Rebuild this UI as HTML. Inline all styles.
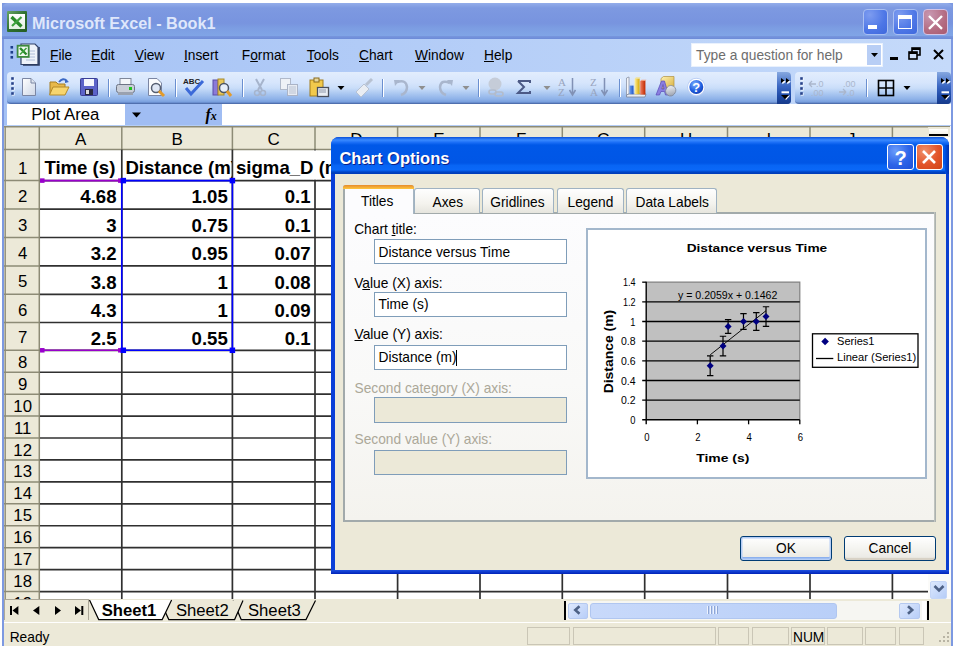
<!DOCTYPE html><html><head><meta charset="utf-8"><style>
*{margin:0;padding:0;box-sizing:border-box}
html,body{width:957px;height:649px;overflow:hidden;background:#fff;font-family:"Liberation Sans",sans-serif;position:relative}
.a{position:absolute}
.t{position:absolute;white-space:nowrap;line-height:1}
</style></head><body><div class="a" style="left:2.00px;top:3.00px;width:951.00px;height:643.00px;background:#7d99e1"></div>
<div class="a" style="left:2.00px;top:3.00px;width:951.00px;height:35.00px;background:linear-gradient(#93adea 0px,#7d99e1 5px,#7894df 20px,#7c9de2 25px,#80a5e6 33px,#7a9de2 35px);border-radius:6px 6px 0 0"></div>
<div class="a" style="left:6.50px;top:11.00px;width:20.30px;height:20.70px;background:linear-gradient(135deg,#6aa66a,#2f702f 50%,#245c24);border-radius:1px"></div>
<div class="a" style="left:9.20px;top:13.90px;width:15.50px;height:15.10px;background:linear-gradient(#ffffff,#e3f0e3)"></div>
<svg class="a" style="left:9.2px;top:13.9px" width="15.5" height="15.1" viewBox="0 0 15.5 15.1"><path d="M2.5 3 L12.5 12.5" stroke="#2a8a2a" stroke-width="3.2"/><path d="M12.5 3 L3 12" stroke="#3fa23f" stroke-width="2.2"/></svg>
<div class="t" style="left:32.00px;top:15.29px;font-size:16.2px;font-weight:bold;color:#dfe7fb">Microsoft Excel - Book1</div>
<div class="a" style="left:862.50px;top:9.00px;width:25.00px;height:25.60px;background:radial-gradient(circle at 25% 20%,#7d9cf0,#4d76e6 60%,#3f68dc);border:1.2px solid #a9bff2;border-radius:4px"></div>
<div class="a" style="left:868.30px;top:25.00px;width:9.10px;height:4.00px;background:#fff"></div>
<div class="a" style="left:892.80px;top:9.00px;width:25.00px;height:25.60px;background:radial-gradient(circle at 25% 20%,#7d9cf0,#4d76e6 60%,#3f68dc);border:1.2px solid #a9bff2;border-radius:4px"></div>
<div class="a" style="left:898.20px;top:15.00px;width:13.80px;height:14.00px;border:1.5px solid #fff;border-top-width:4px"></div>
<div class="a" style="left:922.70px;top:9.00px;width:25.00px;height:25.60px;background:radial-gradient(circle at 25% 20%,#c797b0,#b46c82 60%,#a85a70);border:1.2px solid #d3c4e6;border-radius:4px"></div>
<svg class="a" style="left:922.7px;top:9px" width="25" height="26" viewBox="0 0 25 26"><path d="M6 7 L19 19.8 M19 7 L6 19.8" stroke="#fff" stroke-width="2.4"/></svg>
<div class="a" style="left:4.00px;top:38.00px;width:947.00px;height:33.50px;background:linear-gradient(90deg,#a5c2f5,#c5dafa)"></div>
<div class="a" style="left:2.00px;top:36.30px;width:951.00px;height:3.20px;background:linear-gradient(#7896de,#6c8bd7)"></div>
<svg class="a" style="left:6px;top:42px" width="36" height="26" viewBox="0 0 36 26"><rect x="4.5" y="4" width="2.6" height="2.6" fill="#1e3f8a"/><rect x="4.5" y="9" width="2.6" height="2.6" fill="#1e3f8a"/><rect x="4.5" y="14" width="2.6" height="2.6" fill="#1e3f8a"/><path d="M15 2 L29 2 L32 5 L32 22.5 L15 22.5 Z" fill="#eef2fa" stroke="#32436b" stroke-width="1.2"/><path d="M17 23 H33 V5" stroke="#2b3a5e" stroke-width="1.6" fill="none"/><path d="M20 9 H29 M20 12 H29 M20 15 H29 M20 18 H29" stroke="#9fb0d0" stroke-width="0.8"/><rect x="10.7" y="2.8" width="12.9" height="13" fill="#3d8a3d"/><rect x="12.5" y="4.6" width="9.3" height="9.4" fill="#f2faf2"/><path d="M14 6 L20.5 12.5" stroke="#2a8a2a" stroke-width="2.4"/><path d="M20.5 6 L14 12.5" stroke="#3fa23f" stroke-width="1.6"/></svg>
<div class="t" style="left:50.00px;top:48.86px;font-size:13.75px;color:#000"><u>F</u>ile</div>
<div class="t" style="left:91.00px;top:48.86px;font-size:13.75px;color:#000"><u>E</u>dit</div>
<div class="t" style="left:134.70px;top:48.86px;font-size:13.75px;color:#000"><u>V</u>iew</div>
<div class="t" style="left:184.00px;top:48.86px;font-size:13.75px;color:#000"><u>I</u>nsert</div>
<div class="t" style="left:241.80px;top:48.86px;font-size:13.75px;color:#000">F<u>o</u>rmat</div>
<div class="t" style="left:306.80px;top:48.86px;font-size:13.75px;color:#000"><u>T</u>ools</div>
<div class="t" style="left:359.00px;top:48.86px;font-size:13.75px;color:#000"><u>C</u>hart</div>
<div class="t" style="left:415.00px;top:48.86px;font-size:13.75px;color:#000"><u>W</u>indow</div>
<div class="t" style="left:484.00px;top:48.86px;font-size:13.75px;color:#000"><u>H</u>elp</div>
<div class="a" style="left:691.00px;top:43.00px;width:191.50px;height:23.50px;background:#fff;border:1.5px solid #e9f1fd"></div>
<div class="a" style="left:867.00px;top:44.50px;width:14.00px;height:20.50px;background:#b8cef5"></div>
<svg class="a" style="left:869px;top:50px" width="12" height="10"><path d="M2 3 L9 3 L5.5 7 Z" fill="#000"/></svg>
<div class="t" style="left:696.00px;top:48.86px;font-size:13.75px;color:#6d6d6d">Type a question for help</div>
<div class="a" style="left:890.00px;top:56.50px;width:8.00px;height:3.50px;background:#000"></div>
<svg class="a" style="left:907px;top:46px" width="16" height="16"><rect x="5" y="2" width="8" height="7" fill="none" stroke="#000" stroke-width="1.6"/><rect x="5" y="2" width="8" height="2" fill="#000"/><rect x="2" y="6" width="8" height="7" fill="#cfe0fa" stroke="#000" stroke-width="1.6"/><rect x="2" y="6" width="8" height="2" fill="#000"/></svg>
<svg class="a" style="left:931px;top:47px" width="16" height="16"><path d="M3 3 L12 12 M12 3 L3 12" stroke="#000" stroke-width="2"/></svg>
<div class="a" style="left:4.00px;top:71.50px;width:947.00px;height:32.50px;background:linear-gradient(90deg,#a5c2f5,#c5dafa)"></div>
<div class="a" style="left:6.50px;top:71.50px;width:784.50px;height:32.00px;background:linear-gradient(#e2edfd 0%,#d6e5fc 35%,#c9ddf9 52%,#aac7f1 70%,#8db1e8 88%,#7aa0de 96%,#5f82c4 100%);border-radius:4px;border-bottom:1.5px solid #4f6fae"></div>
<svg class="a" style="left:10.0px;top:76px" width="6" height="22"><rect x="2" y="2" width="2.6" height="2.6" fill="#fff" opacity=".8"/><rect x="1.2" y="1.2" width="2.6" height="2.6" fill="#27428a"/><rect x="2" y="7" width="2.6" height="2.6" fill="#fff" opacity=".8"/><rect x="1.2" y="6.2" width="2.6" height="2.6" fill="#27428a"/><rect x="2" y="12" width="2.6" height="2.6" fill="#fff" opacity=".8"/><rect x="1.2" y="11.2" width="2.6" height="2.6" fill="#27428a"/><rect x="2" y="17" width="2.6" height="2.6" fill="#fff" opacity=".8"/><rect x="1.2" y="16.2" width="2.6" height="2.6" fill="#27428a"/></svg>
<div class="a" style="left:777.00px;top:71.50px;width:14.00px;height:32.00px;background:linear-gradient(#86a8e0,#3a66c2 45%,#1e4aa6 75%,#173b8a);border-radius:0 4px 4px 0"></div>
<svg class="a" style="left:779px;top:76px" width="12" height="26"><path d="M2.5 2.5 L6 5 L2.5 7.5 Z M7.5 2.5 L11 5 L7.5 7.5 Z" fill="#fff" transform="translate(0.8 0.8)"/><path d="M2 2 L5.5 4.5 L2 7 Z M7 2 L10.5 4.5 L7 7 Z" fill="#000"/><rect x="2.5" y="15.3" width="7.5" height="2" fill="#fff"/><path d="M3 19.5 L11 19.5 L7 24 Z" fill="#fff"/><path d="M2 19 L10 19 L6 23.3 Z" fill="#000"/></svg>
<div class="a" style="left:795.00px;top:71.50px;width:155.50px;height:32.00px;background:linear-gradient(#e2edfd 0%,#d6e5fc 35%,#c9ddf9 52%,#aac7f1 70%,#8db1e8 88%,#7aa0de 96%,#5f82c4 100%);border-radius:4px;border-bottom:1.5px solid #4f6fae"></div>
<svg class="a" style="left:798.5px;top:76px" width="6" height="22"><rect x="2" y="2" width="2.6" height="2.6" fill="#fff" opacity=".8"/><rect x="1.2" y="1.2" width="2.6" height="2.6" fill="#27428a"/><rect x="2" y="7" width="2.6" height="2.6" fill="#fff" opacity=".8"/><rect x="1.2" y="6.2" width="2.6" height="2.6" fill="#27428a"/><rect x="2" y="12" width="2.6" height="2.6" fill="#fff" opacity=".8"/><rect x="1.2" y="11.2" width="2.6" height="2.6" fill="#27428a"/><rect x="2" y="17" width="2.6" height="2.6" fill="#fff" opacity=".8"/><rect x="1.2" y="16.2" width="2.6" height="2.6" fill="#27428a"/></svg>
<div class="a" style="left:936.50px;top:71.50px;width:14.00px;height:32.00px;background:linear-gradient(#86a8e0,#3a66c2 45%,#1e4aa6 75%,#173b8a);border-radius:0 4px 4px 0"></div>
<svg class="a" style="left:938.5px;top:76px" width="12" height="26"><path d="M2.5 2.5 L6 5 L2.5 7.5 Z M7.5 2.5 L11 5 L7.5 7.5 Z" fill="#fff" transform="translate(0.8 0.8)"/><path d="M2 2 L5.5 4.5 L2 7 Z M7 2 L10.5 4.5 L7 7 Z" fill="#000"/><rect x="2.5" y="15.3" width="7.5" height="2" fill="#fff"/><path d="M3 19.5 L11 19.5 L7 24 Z" fill="#fff"/><path d="M2 19 L10 19 L6 23.3 Z" fill="#000"/></svg>
<svg class="a" style="left:20px;top:77px" width="18" height="20" viewBox="0 0 18 20"><defs><linearGradient id="gp" x1="0" y1="0" x2="1" y2="1"><stop offset="0" stop-color="#fff"/><stop offset="1" stop-color="#cdd6e6"/></linearGradient></defs><path d="M2.5 1.5 L11 1.5 L15.5 6 L15.5 18.5 L2.5 18.5 Z" fill="url(#gp)" stroke="#7b86a3"/><path d="M11 1.5 L11 6 L15.5 6" fill="#dfe5f0" stroke="#7b86a3"/></svg>
<svg class="a" style="left:48px;top:77px" width="23" height="20" viewBox="0 0 23 20"><path d="M2 5 L8 5 L10 7 L17 7 L17 17 L2 17 Z" fill="#e7b84a" stroke="#a57d22"/><path d="M5 10 L21 10 L17 18 L1.5 18 Z" fill="#f7d56e" stroke="#b48a28"/><path d="M11 5 Q15 0 19 4" stroke="#3b68c4" stroke-width="2" fill="none"/><path d="M17 2 L21 5 L17 6 Z" fill="#3b68c4"/></svg>
<svg class="a" style="left:79px;top:77px" width="20" height="20" viewBox="0 0 20 20"><rect x="1.5" y="1.5" width="17" height="17" rx="1" fill="#5b63c8" stroke="#3a3f96"/><rect x="5" y="2" width="10" height="7" fill="#f4f6fc"/><rect x="6" y="12" width="8" height="6" fill="#2a2a40"/><rect x="7" y="13" width="3" height="4" fill="#ddd"/></svg>
<div class="a" style="left:107.50px;top:78.50px;width:1.00px;height:18.50px;background:#6a8fd0"></div>
<div class="a" style="left:108.50px;top:78.50px;width:1.00px;height:18.50px;background:#fff"></div>
<svg class="a" style="left:115px;top:77px" width="21" height="20" viewBox="0 0 21 20"><rect x="5" y="1.5" width="11" height="7" fill="#f4f6fa" stroke="#7f8799"/><rect x="1.5" y="7.5" width="18" height="8" rx="2" fill="#c9ced8" stroke="#6d7484"/><rect x="3" y="15" width="15" height="3" fill="#9aa1af"/><rect x="14" y="10" width="3" height="3" fill="#1fc21f"/></svg>
<svg class="a" style="left:146px;top:77px" width="22" height="21" viewBox="0 0 22 21"><path d="M2.5 1.5 L11 1.5 L15.5 6 L15.5 18.5 L2.5 18.5 Z" fill="#fafbfd" stroke="#7b86a3"/><circle cx="10" cy="11" r="4.5" fill="#dfe7f5" stroke="#555e70" stroke-width="1.5"/><path d="M13 14 L18 19" stroke="#e39b2a" stroke-width="3"/></svg>
<div class="a" style="left:174.50px;top:78.50px;width:1.00px;height:18.50px;background:#6a8fd0"></div>
<div class="a" style="left:175.50px;top:78.50px;width:1.00px;height:18.50px;background:#fff"></div>
<svg class="a" style="left:182px;top:76px" width="23" height="21" viewBox="0 0 23 21"><text x="1" y="8" font-family="Liberation Sans" font-size="8" font-weight="bold" fill="#222">ABC</text><path d="M4 12 L9 18 L21 5" stroke="#3c6ad8" stroke-width="3" fill="none"/></svg>
<svg class="a" style="left:211px;top:77px" width="23" height="21" viewBox="0 0 23 21"><rect x="2" y="3" width="5" height="15" fill="#8b7ad8" stroke="#5a4ca8"/><rect x="7" y="2" width="6" height="16" fill="#e8c65a" stroke="#a88a2a"/><circle cx="13" cy="11" r="4.5" fill="#e6eefa" stroke="#4a5468" stroke-width="1.5"/><path d="M16 14 L20 19" stroke="#e39b2a" stroke-width="3"/></svg>
<div class="a" style="left:241.50px;top:78.50px;width:1.00px;height:18.50px;background:#6a8fd0"></div>
<div class="a" style="left:242.50px;top:78.50px;width:1.00px;height:18.50px;background:#fff"></div>
<svg class="a" style="left:252px;top:77px" width="16" height="20" viewBox="0 0 16 20"><path d="M4 2 L10 13 M12 2 L6 13" stroke="#a6b4cc" stroke-width="2"/><circle cx="5" cy="16" r="2.5" fill="none" stroke="#a6b4cc" stroke-width="1.5"/><circle cx="11" cy="16" r="2.5" fill="none" stroke="#a6b4cc" stroke-width="1.5"/></svg>
<svg class="a" style="left:279px;top:77px" width="22" height="20" viewBox="0 0 22 20"><rect x="1.5" y="1.5" width="10" height="11" fill="#eef1f6" stroke="#b0b9ca"/><rect x="8.5" y="7.5" width="10" height="11" fill="#e7ebf2" stroke="#aab3c6"/><path d="M10 10 H17 M10 12 H17 M10 14 H17 M10 16 H17" stroke="#b9c2d2"/></svg>
<svg class="a" style="left:308px;top:76px" width="24" height="22" viewBox="0 0 24 22"><rect x="2" y="4" width="13" height="16" fill="#f2c94c" stroke="#a27c1c"/><rect x="6" y="2" width="5" height="4" fill="#e6d7a0" stroke="#8a6a1a"/><rect x="9.5" y="11.5" width="11" height="9" fill="#e9edf3" stroke="#4a4f5c" stroke-width="1.3"/><path d="M11 14 H18 M11 16 H18" stroke="#8f98aa"/></svg>
<svg class="a" style="left:336.5px;top:85px" width="8" height="6" viewBox="0 0 8 6"><path d="M0.5 1 L7.5 1 L4 5 Z" fill="#000"/></svg>
<svg class="a" style="left:354px;top:76px" width="22" height="22" viewBox="0 0 22 22"><path d="M2 16 L10 8 L15 13 L7 21 Z" fill="#e9edf3" stroke="#b8c2d2"/><path d="M12 9 L18 3" stroke="#b8c2d2" stroke-width="3"/></svg>
<div class="a" style="left:381.50px;top:78.50px;width:1.00px;height:18.50px;background:#6a8fd0"></div>
<div class="a" style="left:382.50px;top:78.50px;width:1.00px;height:18.50px;background:#fff"></div>
<svg class="a" style="left:392px;top:77px" width="20" height="20" viewBox="0 0 20 20"><path d="M5 5 Q14 2 15 10 Q15 16 9 18" stroke="#a9b6cd" stroke-width="2.5" fill="none"/><path d="M2 3 L8 3 L3 9 Z" fill="#a9b6cd"/></svg>
<svg class="a" style="left:417.5px;top:85px" width="8" height="6" viewBox="0 0 8 6"><path d="M0.5 1 L7.5 1 L4 5 Z" fill="#8f8f8f"/></svg>
<svg class="a" style="left:435px;top:77px" width="20" height="20" viewBox="0 0 20 20"><path d="M15 6 Q6 2 5 10 Q5 16 11 18" stroke="#a9b6cd" stroke-width="2.5" fill="none"/><path d="M18 3 L12 3 L17 9 Z" fill="#a9b6cd"/></svg>
<svg class="a" style="left:461.5px;top:85px" width="8" height="6" viewBox="0 0 8 6"><path d="M0.5 1 L7.5 1 L4 5 Z" fill="#8f8f8f"/></svg>
<div class="a" style="left:477.50px;top:78.50px;width:1.00px;height:18.50px;background:#6a8fd0"></div>
<div class="a" style="left:478.50px;top:78.50px;width:1.00px;height:18.50px;background:#fff"></div>
<svg class="a" style="left:485px;top:76px" width="21" height="22" viewBox="0 0 21 22"><circle cx="10" cy="8" r="6.5" fill="#c5ccd8"/><rect x="4" y="14" width="7" height="4" rx="2" fill="none" stroke="#b3bccb" stroke-width="1.6"/><rect x="10" y="16" width="8" height="4" rx="2" fill="none" stroke="#b3bccb" stroke-width="1.6"/></svg>
<svg class="a" style="left:515px;top:77px" width="20" height="20" viewBox="0 0 20 20"><path d="M3 4 L15 4 L15 6 M3 4 L9 10 L3 16 L15 16 L15 14" stroke="#4c5a86" stroke-width="2" fill="none"/></svg>
<svg class="a" style="left:542.6px;top:85px" width="8" height="6" viewBox="0 0 8 6"><path d="M0.5 1 L7.5 1 L4 5 Z" fill="#8f8f8f"/></svg>
<svg class="a" style="left:557px;top:76px" width="24" height="22" viewBox="0 0 24 22"><text x="1" y="10" font-family="Liberation Serif" font-size="11" fill="#98a4be">A</text><text x="1" y="20" font-family="Liberation Serif" font-size="11" fill="#98a4be">Z</text><path d="M15.5 2 V18 M12.5 14 L15.5 19 L18.5 14" stroke="#8191b5" stroke-width="1.5" fill="none"/></svg>
<svg class="a" style="left:589px;top:76px" width="24" height="22" viewBox="0 0 24 22"><text x="1" y="10" font-family="Liberation Serif" font-size="11" fill="#98a4be">Z</text><text x="1" y="20" font-family="Liberation Serif" font-size="11" fill="#98a4be">A</text><path d="M15.5 2 V18 M12.5 14 L15.5 19 L18.5 14" stroke="#8191b5" stroke-width="1.5" fill="none"/></svg>
<div class="a" style="left:618.50px;top:78.50px;width:1.00px;height:18.50px;background:#6a8fd0"></div>
<div class="a" style="left:619.50px;top:78.50px;width:1.00px;height:18.50px;background:#fff"></div>
<svg class="a" style="left:624px;top:75px" width="24" height="24" viewBox="0 0 24 24"><defs><linearGradient id="cwb" x1="0" x2="1"><stop offset="0" stop-color="#6fa0f0"/><stop offset="1" stop-color="#1f55c8"/></linearGradient><linearGradient id="cwy" x1="0" x2="1"><stop offset="0" stop-color="#fff0a0"/><stop offset="1" stop-color="#d8a800"/></linearGradient><linearGradient id="cwr" x1="0" x2="1"><stop offset="0" stop-color="#f08060"/><stop offset="1" stop-color="#c02800"/></linearGradient></defs><path d="M2.5 3 L5 2 L5 19 L2.5 20 Z" fill="#f4f6fa" stroke="#8a93a6" stroke-width="0.8"/><path d="M2.5 20 L5 19 L22 19 L21 22 L2.5 22 Z" fill="#e8ecf4" stroke="#7a8498" stroke-width="0.8"/><rect x="5.5" y="10.6" width="4" height="8.6" fill="url(#cwb)"/><rect x="10.6" y="3.6" width="5" height="15.6" fill="url(#cwy)"/><rect x="16.2" y="6" width="5.2" height="13.6" fill="url(#cwr)"/><path d="M10.6 3.6 L12 2.4 L16.8 2.4 L15.6 3.6 Z" fill="#f8e070"/><path d="M16.2 6 L17.6 4.8 L22.4 4.8 L21.4 6 Z" fill="#f0a080"/></svg>
<svg class="a" style="left:654px;top:74px" width="24" height="24" viewBox="0 0 24 24"><defs><linearGradient id="dcy" x1="0" y1="0" x2="1" y2="1"><stop offset="0" stop-color="#fff2b0"/><stop offset="1" stop-color="#d8b040"/></linearGradient><linearGradient id="dcg" x1="0" y1="0" x2="1" y2="1"><stop offset="0" stop-color="#ffffff"/><stop offset="1" stop-color="#8c94a4"/></linearGradient></defs><path d="M7 4.5 L9.5 2.5 L20 2.5 L20 13 L17.5 14.5 L7 14.5 Z" fill="url(#dcy)" stroke="#b09040" stroke-width="0.7"/><path d="M2 21 L7.5 7 L10.5 7 L14.5 21 L11.5 21 L10.5 17.5 L7 17.5 L5.5 21 Z M7.8 15 L10 15 L9 10.5 Z" fill="#8a7ee0" stroke="#5a4ab8" stroke-width="0.7"/><rect x="12" y="11.5" width="9.5" height="10.5" rx="4.5" transform="rotate(35 16.7 16.7)" fill="url(#dcg)" stroke="#7b8496" stroke-width="0.7"/></svg>
<svg class="a" style="left:686px;top:77px" width="21" height="21" viewBox="0 0 21 21"><defs><radialGradient id="hg" cx="0.4" cy="0.3" r="0.8"><stop offset="0" stop-color="#7fb0ff"/><stop offset="0.6" stop-color="#1f5ee0"/><stop offset="1" stop-color="#1238a8"/></radialGradient></defs><circle cx="10.3" cy="10" r="9.2" fill="#b9cdf4"/><circle cx="10.3" cy="10" r="8.3" fill="#fff"/><circle cx="10.3" cy="10" r="7" fill="url(#hg)"/><text x="10.3" y="14.8" text-anchor="middle" font-family="Liberation Sans" font-weight="bold" font-size="13" fill="#fff">?</text></svg>
<svg class="a" style="left:807px;top:78px" width="22" height="20" viewBox="0 0 22 20"><path d="M2 6 H9 M2 6 L5 3 M2 6 L5 9" stroke="#aab6cc" stroke-width="1.3" fill="none"/><text x="9" y="9" font-family="Liberation Sans" font-size="9" fill="#aab6cc">.0</text><text x="4" y="18" font-family="Liberation Sans" font-size="9" fill="#aab6cc">.00</text></svg>
<svg class="a" style="left:837px;top:78px" width="22" height="20" viewBox="0 0 22 20"><text x="6" y="9" font-family="Liberation Sans" font-size="9" fill="#aab6cc">.00</text><path d="M2 14 H9 M9 14 L6 11 M9 14 L6 17" stroke="#aab6cc" stroke-width="1.3" fill="none"/><text x="10" y="18" font-family="Liberation Sans" font-size="9" fill="#aab6cc">.0</text></svg>
<div class="a" style="left:866.10px;top:78.50px;width:1.00px;height:18.50px;background:#6a8fd0"></div>
<div class="a" style="left:867.10px;top:78.50px;width:1.00px;height:18.50px;background:#fff"></div>
<svg class="a" style="left:876px;top:78px" width="20" height="20" viewBox="0 0 20 20"><rect x="2.5" y="2.5" width="15" height="15" fill="none" stroke="#000" stroke-width="1.6"/><path d="M10 2.5 V17.5 M2.5 10 H17.5" stroke="#000" stroke-width="1.6"/></svg>
<svg class="a" style="left:902.5px;top:85px" width="8" height="6" viewBox="0 0 8 6"><path d="M0.5 1 L7.5 1 L4 5 Z" fill="#000"/></svg>
<div class="a" style="left:4.00px;top:103.50px;width:947.00px;height:22.50px;background:#fff"></div>
<div class="a" style="left:4.00px;top:103.50px;width:3.00px;height:22.50px;background:#a5c2f5"></div>
<div class="a" style="left:4.00px;top:124.50px;width:947.00px;height:1.70px;background:#b4cdf6"></div>
<div class="a" style="left:7.00px;top:103.50px;width:118.00px;height:21.50px;background:#fff"></div>
<div class="a" style="left:125.00px;top:103.50px;width:97.00px;height:21.50px;background:#a0bdf3"></div>
<svg class="a" style="left:131px;top:111px" width="12" height="8" viewBox="0 0 12 8"><path d="M1 1.5 L10 1.5 L5.5 6.5 Z" fill="#000"/></svg>
<div class="t" style="left:31.30px;top:106.58px;font-size:16.8px;color:#000">Plot Area</div>
<div class="t" style="left:205.5px;top:107px;font-family:'Liberation Serif';font-style:italic;font-weight:bold;font-size:16px;color:#000">f<span style="font-size:12px">x</span></div>
<div class="a" style="left:4.00px;top:126.00px;width:924.00px;height:23.60px;background:#ece9d8"></div>
<div class="a" style="left:4.00px;top:149.60px;width:35.30px;height:449.40px;background:#ece9d8"></div>
<div class="a" style="left:39.30px;top:149.60px;width:888.70px;height:449.40px;background:#fff"></div>
<svg class="a" style="left:0;top:0" width="957" height="649" viewBox="0 0 957 649"><path d="M4 126.8 H928" stroke="#8d8b76" stroke-width="1.5"/><path d="M39.3 127 V149.6" stroke="#8d8b76" stroke-width="1.5"/><path d="M121.8 127 V149.6" stroke="#8d8b76" stroke-width="1.5"/><path d="M232.4 127 V149.6" stroke="#8d8b76" stroke-width="1.5"/><path d="M315 127 V149.6" stroke="#8d8b76" stroke-width="1.5"/><path d="M397.6 127 V149.6" stroke="#8d8b76" stroke-width="1.5"/><path d="M480 127 V149.6" stroke="#8d8b76" stroke-width="1.5"/><path d="M562.3 127 V149.6" stroke="#8d8b76" stroke-width="1.5"/><path d="M644.7 127 V149.6" stroke="#8d8b76" stroke-width="1.5"/><path d="M727.5 127 V149.6" stroke="#8d8b76" stroke-width="1.5"/><path d="M810 127 V149.6" stroke="#8d8b76" stroke-width="1.5"/><path d="M892.4 127 V149.6" stroke="#8d8b76" stroke-width="1.5"/><path d="M5.2 127 V599" stroke="#8d8b76" stroke-width="1.4"/><path d="M4 149.5 H928" stroke="#8d8b76" stroke-width="1.5"/><path d="M39.3 149.6 V599" stroke="#8d8b76" stroke-width="1.5"/><path d="M4 180.6 H39.3" stroke="#8d8b76" stroke-width="1.5"/><path d="M4 209.1 H39.3" stroke="#8d8b76" stroke-width="1.5"/><path d="M4 237.5 H39.3" stroke="#8d8b76" stroke-width="1.5"/><path d="M4 265.9 H39.3" stroke="#8d8b76" stroke-width="1.5"/><path d="M4 294.3 H39.3" stroke="#8d8b76" stroke-width="1.5"/><path d="M4 322.5 H39.3" stroke="#8d8b76" stroke-width="1.5"/><path d="M4 350.3 H39.3" stroke="#8d8b76" stroke-width="1.5"/><path d="M4 372.23 H39.3" stroke="#8d8b76" stroke-width="1.5"/><path d="M4 394.16 H39.3" stroke="#8d8b76" stroke-width="1.5"/><path d="M4 416.09000000000003 H39.3" stroke="#8d8b76" stroke-width="1.5"/><path d="M4 438.02000000000004 H39.3" stroke="#8d8b76" stroke-width="1.5"/><path d="M4 459.95000000000005 H39.3" stroke="#8d8b76" stroke-width="1.5"/><path d="M4 481.88000000000005 H39.3" stroke="#8d8b76" stroke-width="1.5"/><path d="M4 503.81000000000006 H39.3" stroke="#8d8b76" stroke-width="1.5"/><path d="M4 525.74 H39.3" stroke="#8d8b76" stroke-width="1.5"/><path d="M4 547.67 H39.3" stroke="#8d8b76" stroke-width="1.5"/><path d="M4 569.5999999999999 H39.3" stroke="#8d8b76" stroke-width="1.5"/><path d="M4 591.5299999999999 H39.3" stroke="#8d8b76" stroke-width="1.5"/><path d="M121.8 149.6 V599" stroke="#303030" stroke-width="1.7"/><path d="M232.4 149.6 V599" stroke="#303030" stroke-width="1.7"/><path d="M315 149.6 V599" stroke="#303030" stroke-width="1.7"/><path d="M397.6 149.6 V599" stroke="#303030" stroke-width="1.7"/><path d="M480 149.6 V599" stroke="#303030" stroke-width="1.7"/><path d="M562.3 149.6 V599" stroke="#303030" stroke-width="1.7"/><path d="M644.7 149.6 V599" stroke="#303030" stroke-width="1.7"/><path d="M727.5 149.6 V599" stroke="#303030" stroke-width="1.7"/><path d="M810 149.6 V599" stroke="#303030" stroke-width="1.7"/><path d="M892.4 149.6 V599" stroke="#303030" stroke-width="1.7"/><path d="M39.9 180.6 H928" stroke="#303030" stroke-width="1.7"/><path d="M39.9 209.1 H928" stroke="#303030" stroke-width="1.7"/><path d="M39.9 237.5 H928" stroke="#303030" stroke-width="1.7"/><path d="M39.9 265.9 H928" stroke="#303030" stroke-width="1.7"/><path d="M39.9 294.3 H928" stroke="#303030" stroke-width="1.7"/><path d="M39.9 322.5 H928" stroke="#303030" stroke-width="1.7"/><path d="M39.9 350.3 H928" stroke="#303030" stroke-width="1.7"/><path d="M39.9 372.23 H928" stroke="#303030" stroke-width="1.7"/><path d="M39.9 394.16 H928" stroke="#303030" stroke-width="1.7"/><path d="M39.9 416.09000000000003 H928" stroke="#303030" stroke-width="1.7"/><path d="M39.9 438.02000000000004 H928" stroke="#303030" stroke-width="1.7"/><path d="M39.9 459.95000000000005 H928" stroke="#303030" stroke-width="1.7"/><path d="M39.9 481.88000000000005 H928" stroke="#303030" stroke-width="1.7"/><path d="M39.9 503.81000000000006 H928" stroke="#303030" stroke-width="1.7"/><path d="M39.9 525.74 H928" stroke="#303030" stroke-width="1.7"/><path d="M39.9 547.67 H928" stroke="#303030" stroke-width="1.7"/><path d="M39.9 569.5999999999999 H928" stroke="#303030" stroke-width="1.7"/><path d="M39.9 591.5299999999999 H928" stroke="#303030" stroke-width="1.7"/><rect x="313.5" y="150.5" width="3" height="29.1" fill="#fff"/></svg>
<div class="t" style="left:-119.45px;width:400px;text-align:center;top:130.61px;font-size:17px;color:#000">A</div>
<div class="t" style="left:-22.90px;width:400px;text-align:center;top:130.61px;font-size:17px;color:#000">B</div>
<div class="t" style="left:73.70px;width:400px;text-align:center;top:130.61px;font-size:17px;color:#000">C</div>
<div class="t" style="left:156.30px;width:400px;text-align:center;top:130.61px;font-size:17px;color:#000">D</div>
<div class="t" style="left:238.80px;width:400px;text-align:center;top:130.61px;font-size:17px;color:#000">E</div>
<div class="t" style="left:321.15px;width:400px;text-align:center;top:130.61px;font-size:17px;color:#000">F</div>
<div class="t" style="left:403.50px;width:400px;text-align:center;top:130.61px;font-size:17px;color:#000">G</div>
<div class="t" style="left:486.10px;width:400px;text-align:center;top:130.61px;font-size:17px;color:#000">H</div>
<div class="t" style="left:568.75px;width:400px;text-align:center;top:130.61px;font-size:17px;color:#000">I</div>
<div class="t" style="left:651.20px;width:400px;text-align:center;top:130.61px;font-size:17px;color:#000">J</div>
<div class="t" style="left:-177.35px;width:400px;text-align:center;top:160.78px;font-size:16.8px;color:#000">1</div>
<div class="t" style="left:-177.35px;width:400px;text-align:center;top:189.28px;font-size:16.8px;color:#000">2</div>
<div class="t" style="left:-177.35px;width:400px;text-align:center;top:217.68px;font-size:16.8px;color:#000">3</div>
<div class="t" style="left:-177.35px;width:400px;text-align:center;top:246.08px;font-size:16.8px;color:#000">4</div>
<div class="t" style="left:-177.35px;width:400px;text-align:center;top:274.48px;font-size:16.8px;color:#000">5</div>
<div class="t" style="left:-177.35px;width:400px;text-align:center;top:302.68px;font-size:16.8px;color:#000">6</div>
<div class="t" style="left:-177.35px;width:400px;text-align:center;top:330.48px;font-size:16.8px;color:#000">7</div>
<div class="t" style="left:-177.35px;width:400px;text-align:center;top:354.81px;font-size:16.8px;color:#000">8</div>
<div class="t" style="left:-177.35px;width:400px;text-align:center;top:376.74px;font-size:16.8px;color:#000">9</div>
<div class="t" style="left:-177.35px;width:400px;text-align:center;top:398.67px;font-size:16.8px;color:#000">10</div>
<div class="t" style="left:-177.35px;width:400px;text-align:center;top:420.60px;font-size:16.8px;color:#000">11</div>
<div class="t" style="left:-177.35px;width:400px;text-align:center;top:442.53px;font-size:16.8px;color:#000">12</div>
<div class="t" style="left:-177.35px;width:400px;text-align:center;top:464.46px;font-size:16.8px;color:#000">13</div>
<div class="t" style="left:-177.35px;width:400px;text-align:center;top:486.39px;font-size:16.8px;color:#000">14</div>
<div class="t" style="left:-177.35px;width:400px;text-align:center;top:508.32px;font-size:16.8px;color:#000">15</div>
<div class="t" style="left:-177.35px;width:400px;text-align:center;top:530.25px;font-size:16.8px;color:#000">16</div>
<div class="t" style="left:-177.35px;width:400px;text-align:center;top:552.18px;font-size:16.8px;color:#000">17</div>
<div class="t" style="left:-177.35px;width:400px;text-align:center;top:574.11px;font-size:16.8px;color:#000">18</div>
<div class="t" style="left:-177.35px;width:400px;text-align:center;top:596.04px;font-size:16.8px;color:#000">19</div>
<div class="t" style="left:44.40px;top:158.56px;font-size:18.6px;font-weight:bold;color:#000">Time (s)</div>
<div class="a" style="left:122px;top:150px;width:109.5px;height:30px;overflow:hidden"><div class="t" style="left:3.4px;top:8.56px;font-size:18.6px;font-weight:bold">Distance (m)</div></div>
<div class="t" style="left:236.00px;top:158.56px;font-size:18.6px;font-weight:bold;color:#000">sigma_D (m)</div>
<div class="t" style="right:840.50px;top:188.46px;font-size:18.6px;font-weight:bold;color:#000">4.68</div>
<div class="t" style="right:729.20px;top:188.46px;font-size:18.6px;font-weight:bold;color:#000">1.05</div>
<div class="t" style="right:646.40px;top:188.46px;font-size:18.6px;font-weight:bold;color:#000">0.1</div>
<div class="t" style="right:840.50px;top:216.86px;font-size:18.6px;font-weight:bold;color:#000">3</div>
<div class="t" style="right:729.20px;top:216.86px;font-size:18.6px;font-weight:bold;color:#000">0.75</div>
<div class="t" style="right:646.40px;top:216.86px;font-size:18.6px;font-weight:bold;color:#000">0.1</div>
<div class="t" style="right:840.50px;top:245.26px;font-size:18.6px;font-weight:bold;color:#000">3.2</div>
<div class="t" style="right:729.20px;top:245.26px;font-size:18.6px;font-weight:bold;color:#000">0.95</div>
<div class="t" style="right:646.40px;top:245.26px;font-size:18.6px;font-weight:bold;color:#000">0.07</div>
<div class="t" style="right:840.50px;top:273.66px;font-size:18.6px;font-weight:bold;color:#000">3.8</div>
<div class="t" style="right:729.20px;top:273.66px;font-size:18.6px;font-weight:bold;color:#000">1</div>
<div class="t" style="right:646.40px;top:273.66px;font-size:18.6px;font-weight:bold;color:#000">0.08</div>
<div class="t" style="right:840.50px;top:301.86px;font-size:18.6px;font-weight:bold;color:#000">4.3</div>
<div class="t" style="right:729.20px;top:301.86px;font-size:18.6px;font-weight:bold;color:#000">1</div>
<div class="t" style="right:646.40px;top:301.86px;font-size:18.6px;font-weight:bold;color:#000">0.09</div>
<div class="t" style="right:840.50px;top:329.66px;font-size:18.6px;font-weight:bold;color:#000">2.5</div>
<div class="t" style="right:729.20px;top:329.66px;font-size:18.6px;font-weight:bold;color:#000">0.55</div>
<div class="t" style="right:646.40px;top:329.66px;font-size:18.6px;font-weight:bold;color:#000">0.1</div>
<svg class="a" style="left:0;top:0" width="957" height="649" viewBox="0 0 957 649"><path d="M40.3 180.6 H121.8 M40.3 350.3 H121.8" stroke="#9900cc" stroke-width="1.6"/><path d="M121.8 180.6 H232.4 V350.3 H121.8 Z" stroke="#0000ff" stroke-width="1.6" fill="none"/><rect x="40.05" y="178.35" width="4.5" height="4.5" fill="#9900cc"/><rect x="118.05" y="178.35" width="4.5" height="4.5" fill="#9900cc"/><rect x="40.05" y="348.05" width="4.5" height="4.5" fill="#9900cc"/><rect x="118.05" y="348.05" width="4.5" height="4.5" fill="#9900cc"/><rect x="120.55" y="177.85" width="5.5" height="5.5" fill="#0000ff"/><rect x="229.65" y="177.85" width="5.5" height="5.5" fill="#0000ff"/><rect x="120.55" y="347.55" width="5.5" height="5.5" fill="#0000ff"/><rect x="229.65" y="347.55" width="5.5" height="5.5" fill="#0000ff"/></svg>
<div class="a" style="left:928.00px;top:126.00px;width:23.00px;height:473.00px;background:#fbfbf9"></div>
<div class="a" style="left:928.00px;top:126.00px;width:22.00px;height:11.00px;background:#ece9d8;border-top:1.5px solid #8d8b76"></div>
<div class="a" style="left:928.50px;top:129.00px;width:19.50px;height:6.50px;background:linear-gradient(#fff,#f4f2e8);border-bottom:2px solid #000"></div>
<div class="a" style="left:930.00px;top:580.50px;width:17.00px;height:18.50px;background:linear-gradient(135deg,#dce8fd,#b6cdf7);border:1px solid #c5d6f6;border-radius:2px"></div>
<svg class="a" style="left:932.5px;top:584px" width="12" height="10" viewBox="0 0 12 10"><path d="M1.5 2 L6 6.5 L10.5 2" stroke="#4d6185" stroke-width="2.6" fill="none"/></svg>
<div class="a" style="left:4.00px;top:599.00px;width:947.00px;height:22.50px;background:#ece9d8"></div>
<div class="a" style="left:4.00px;top:599.00px;width:84.50px;height:21.00px;background:#ece9d8;border-top:1px solid #aca899;border-left:1px solid #aca899;border-right:1px solid #aca899"></div>
<svg class="a" style="left:9px;top:605px" width="12" height="11" viewBox="0 0 12 11"><rect x="1" y="1" width="2" height="9" fill="#000"/><path d="M9.4 1 L3.5 5.5 L9.4 10 Z" fill="#000"/></svg>
<svg class="a" style="left:32px;top:605px" width="8" height="11" viewBox="0 0 8 11"><path d="M7.3 1 L1 5.5 L7.3 10 Z" fill="#000"/></svg>
<svg class="a" style="left:53.5px;top:605px" width="8" height="11" viewBox="0 0 8 11"><path d="M1 1 L7 5.5 L1 10 Z" fill="#000"/></svg>
<svg class="a" style="left:73.5px;top:605px" width="12" height="11" viewBox="0 0 12 11"><path d="M1 1 L7 5.5 L1 10 Z" fill="#000"/><rect x="7.3" y="1" width="2" height="9" fill="#000"/></svg>
<svg class="a" style="left:80px;top:598px" width="250" height="24" viewBox="80 598 250 24"><path d="M233 600.6 L241.2 619.6 L306 619.6 L315.5 600.6" fill="#ece9d8" stroke="#000" stroke-width="1.2"/><path d="M160 600.6 L168.8 619.6 L234.6 619.6 L243 600.6" fill="#ece9d8" stroke="#000" stroke-width="1.2"/><path d="M89.5 600 L98.7 619.6 L162.2 619.6 L171.6 600 Z" fill="#fff"/><path d="M89.5 600 L98.7 619.6 L162.2 619.6 L171.6 600" fill="none" stroke="#000" stroke-width="1.2"/></svg>
<div class="t" style="left:101.70px;top:603.29px;font-size:16.67px;font-weight:bold;color:#000">Sheet1</div>
<div class="t" style="left:175.90px;top:603.29px;font-size:16.67px;color:#000">Sheet2</div>
<div class="t" style="left:248.00px;top:603.29px;font-size:16.67px;color:#000">Sheet3</div>
<div class="a" style="left:564.00px;top:601.00px;width:2.00px;height:19.00px;background:#000"></div>
<div class="a" style="left:566.00px;top:601.00px;width:385.00px;height:19.00px;background:#f6f6f2"></div>
<div class="a" style="left:568.30px;top:602.50px;width:20.00px;height:16.00px;background:linear-gradient(135deg,#dde8fd,#b8cef8);border:1px solid #b5c9f0;border-radius:2px"></div>
<svg class="a" style="left:572px;top:605px" width="12" height="10" viewBox="0 0 12 10"><path d="M7.5 1.2 L3.3 5 L7.5 8.8" stroke="#4d6185" stroke-width="2.6" fill="none"/></svg>
<div class="a" style="left:589.80px;top:602.50px;width:246.90px;height:16.00px;background:linear-gradient(90deg,#c8d9fa,#b9cff8);border:1px solid #b0c6f0;border-radius:3px"></div>
<svg class="a" style="left:706px;top:605px" width="12" height="10" viewBox="0 0 12 10"><path d="M1.5 1V9M4.5 1V9M7.5 1V9M10.5 1V9" stroke="#eef3fd" stroke-width="1"/><path d="M2.5 1V9M5.5 1V9M8.5 1V9M11.5 1V9" stroke="#8ea6d6" stroke-width="1"/></svg>
<div class="a" style="left:898.70px;top:602.50px;width:21.30px;height:16.00px;background:linear-gradient(135deg,#dde8fd,#b8cef8);border:1px solid #b5c9f0;border-radius:2px"></div>
<svg class="a" style="left:904px;top:605px" width="12" height="10" viewBox="0 0 12 10"><path d="M4 1.2 L8.2 5 L4 8.8" stroke="#4d6185" stroke-width="2.6" fill="none"/></svg>
<div class="a" style="left:922.00px;top:601.00px;width:4.00px;height:19.00px;background:#fff"></div>
<div class="a" style="left:927.00px;top:601.00px;width:1.50px;height:19.00px;background:#000"></div>
<div class="a" style="left:928.50px;top:599.00px;width:22.50px;height:22.50px;background:#ece9d8"></div>
<div class="a" style="left:4.00px;top:621.50px;width:947.00px;height:24.50px;background:#ece9d8"></div>
<div class="a" style="left:4.00px;top:621.50px;width:947.00px;height:1.50px;background:#fff"></div>
<div class="t" style="left:9.70px;top:630.66px;font-size:13.75px;color:#000">Ready</div>
<div class="a" style="left:527.20px;top:627.00px;width:43.00px;height:18.00px;border:1px solid #cac6b6"></div>
<div class="a" style="left:572.60px;top:627.00px;width:143.20px;height:18.00px;border:1px solid #cac6b6"></div>
<div class="a" style="left:718.20px;top:627.00px;width:31.10px;height:18.00px;border:1px solid #cac6b6"></div>
<div class="a" style="left:751.70px;top:627.00px;width:37.30px;height:18.00px;border:1px solid #cac6b6"></div>
<div class="a" style="left:791.30px;top:627.00px;width:33.40px;height:18.00px;border:1px solid #cac6b6"></div>
<div class="a" style="left:827.00px;top:627.00px;width:36.00px;height:18.00px;border:1px solid #cac6b6"></div>
<div class="a" style="left:865.30px;top:627.00px;width:31.10px;height:18.00px;border:1px solid #cac6b6"></div>
<div class="a" style="left:898.80px;top:627.00px;width:24.80px;height:18.00px;border:1px solid #cac6b6"></div>
<div class="t" style="left:793.00px;top:630.66px;font-size:13.75px;color:#000">NUM</div>
<svg class="a" style="left:937px;top:631px" width="13" height="13" viewBox="0 0 13 13"><rect x="10" y="1" width="2" height="2" fill="#b8b4a4"/><rect x="6" y="5" width="2" height="2" fill="#b8b4a4"/><rect x="10" y="5" width="2" height="2" fill="#b8b4a4"/><rect x="2" y="9" width="2" height="2" fill="#b8b4a4"/><rect x="6" y="9" width="2" height="2" fill="#b8b4a4"/><rect x="10" y="9" width="2" height="2" fill="#b8b4a4"/></svg>
<div class="a" style="left:331.20px;top:137.40px;width:618.00px;height:436.20px;background:linear-gradient(90deg,#0a3fd8,#1d5ae8 40%,#1d5ae8 60%,#0a3fd0);border-radius:8px 8px 0 0"></div>
<div class="a" style="left:331.20px;top:570.10px;width:618.00px;height:3.50px;background:linear-gradient(#1d50e0,#0022b8)"></div>
<div class="a" style="left:331.20px;top:137.40px;width:618.00px;height:36.60px;background:linear-gradient(#0b50d8 0px,#3a8aff 3px,#1a6ef6 5.5px,#0058e8 8px,#0056e6 26px,#0865f4 28.5px,#0a68f8 33px,#0044c6 35px,#003cb8 36.6px);border-radius:8px 8px 0 0"></div>
<div class="a" style="left:945.20px;top:145.40px;width:4.00px;height:28.60px;background:linear-gradient(90deg,#0050e0,#0030b0)"></div>
<div class="t" style="left:339.40px;top:150.23px;font-size:16.5px;font-weight:bold;color:#fff;text-shadow:1px 1px 0 #0a1f8a">Chart Options</div>
<div class="a" style="left:886.80px;top:144.20px;width:26.90px;height:26.30px;background:radial-gradient(circle at 30% 25%,#6a9cfb,#2d64e8 55%,#1e50d8);border:1.5px solid #fff;border-radius:3px"></div>
<div class="t" style="left:700.50px;width:400px;text-align:center;top:148.07px;font-size:20px;font-weight:bold;color:#fff">?</div>
<div class="a" style="left:916.20px;top:144.20px;width:26.40px;height:26.30px;background:radial-gradient(circle at 30% 25%,#f0906a,#e2542a 55%,#cf4416);border:1.5px solid #fff;border-radius:3px"></div>
<svg class="a" style="left:916.2px;top:144.2px" width="26" height="26" viewBox="0 0 26 26"><path d="M7 7 L19 19 M19 7 L7 19" stroke="#fff" stroke-width="2.6"/></svg>
<div class="a" style="left:334.90px;top:174.00px;width:610.70px;height:396.20px;background:#ece9d8"></div>
<div class="a" style="left:342.70px;top:212.00px;width:593.30px;height:310.00px;background:linear-gradient(#fcfcfe 0%,#f9f9f8 55%,#f4f3ee 100%);border:2px solid #a2aaab;border-right-color:#9aa2a2"></div>
<div class="a" style="left:933.50px;top:212.00px;width:2.50px;height:310.00px;background:linear-gradient(90deg,#c9ccc6,#a2a9a8)"></div>
<div class="a" style="left:414.40px;top:188.30px;width:65.30px;height:24.50px;background:linear-gradient(#fefefe,#f4f3ee 60%,#e6e5de);border:1.5px solid #9fb2c2;border-bottom:none;border-radius:3px 3px 0 0"></div>
<div class="t" style="left:432.50px;top:196.16px;font-size:13.75px;color:#000">Axes</div>
<div class="a" style="left:482.20px;top:188.30px;width:72.00px;height:24.50px;background:linear-gradient(#fefefe,#f4f3ee 60%,#e6e5de);border:1.5px solid #9fb2c2;border-bottom:none;border-radius:3px 3px 0 0"></div>
<div class="t" style="left:490.30px;top:196.16px;font-size:13.75px;color:#000">Gridlines</div>
<div class="a" style="left:557.00px;top:188.30px;width:67.30px;height:24.50px;background:linear-gradient(#fefefe,#f4f3ee 60%,#e6e5de);border:1.5px solid #9fb2c2;border-bottom:none;border-radius:3px 3px 0 0"></div>
<div class="t" style="left:567.50px;top:196.16px;font-size:13.75px;color:#000">Legend</div>
<div class="a" style="left:626.30px;top:188.30px;width:91.00px;height:24.50px;background:linear-gradient(#fefefe,#f4f3ee 60%,#e6e5de);border:1.5px solid #9fb2c2;border-bottom:none;border-radius:3px 3px 0 0"></div>
<div class="t" style="left:635.50px;top:196.16px;font-size:13.75px;color:#000">Data Labels</div>
<div class="a" style="left:342.70px;top:185.00px;width:71.70px;height:29.00px;background:#fcfcfe;border:2px solid #a2aaab;border-right:1.5px solid #a7b6c2;border-bottom:none;border-radius:3px 3px 0 0"></div>
<div class="a" style="left:342.70px;top:185.00px;width:71.70px;height:3.90px;background:linear-gradient(#e68b2c,#ffc73c);border-radius:3px 3px 0 0"></div>
<div class="t" style="left:361.00px;top:195.26px;font-size:13.75px;color:#000">Titles</div>
<div class="t" style="left:354.20px;top:223.06px;font-size:13.75px;color:#000">Chart <u>t</u>itle:</div>
<div class="a" style="left:373.80px;top:239.40px;width:193.00px;height:25.10px;background:#fff;border:1px solid #7f9db9"></div>
<div class="t" style="left:378.60px;top:245.66px;font-size:13.75px;color:#000">Distance versus Time</div>
<div class="t" style="left:354.20px;top:276.56px;font-size:13.75px;color:#000">V<u>a</u>lue (X) axis:</div>
<div class="a" style="left:373.80px;top:292.20px;width:193.00px;height:25.10px;background:#fff;border:1px solid #7f9db9"></div>
<div class="t" style="left:378.60px;top:298.46px;font-size:13.75px;color:#000">Time (s)</div>
<div class="t" style="left:354.50px;top:328.06px;font-size:13.75px;color:#000"><u>V</u>alue (Y) axis:</div>
<div class="a" style="left:373.80px;top:345.30px;width:193.00px;height:24.70px;background:#fff;border:1px solid #7f9db9"></div>
<div class="t" style="left:378.60px;top:351.16px;font-size:13.75px;color:#000">Distance (m)</div>
<div class="a" style="left:455.50px;top:350.00px;width:1.20px;height:16.00px;background:#000"></div>
<div class="t" style="left:354.50px;top:381.56px;font-size:13.75px;color:#aca899">Second category (X) axis:</div>
<div class="a" style="left:373.80px;top:397.00px;width:193.00px;height:26.00px;background:#ece9d8;border:1px solid #7f9db9"></div>
<div class="t" style="left:354.50px;top:433.06px;font-size:13.75px;color:#aca899">Second value (Y) axis:</div>
<div class="a" style="left:373.80px;top:449.70px;width:193.00px;height:25.00px;background:#ece9d8;border:1px solid #7f9db9"></div>
<div class="a" style="left:740.00px;top:536.00px;width:92.00px;height:25.00px;box-shadow:inset 0 0 0 1.5px #b5cdf5,inset 0 -2px 0 1px #8cb0ee;background:linear-gradient(#ffffff,#f4f4f0 50%,#ecebe6 85%,#dedad0);border:1.3px solid #003c74;border-radius:3px"></div>
<div class="t" style="left:586.00px;width:400px;text-align:center;top:541.66px;font-size:13.75px;color:#000">OK</div>
<div class="a" style="left:843.60px;top:536.00px;width:92.80px;height:25.00px;box-shadow:inset 0 -2px 0 #d8d2c6;background:linear-gradient(#ffffff,#f4f4f0 50%,#ecebe6 85%,#dedad0);border:1.3px solid #003c74;border-radius:3px"></div>
<div class="t" style="left:690.00px;width:400px;text-align:center;top:541.66px;font-size:13.75px;color:#000">Cancel</div>
<div class="a" style="left:586.20px;top:227.70px;width:340.50px;height:251.00px;background:#fff;border:2px solid #a3b7cc"></div>
<svg class="a" style="left:587px;top:229px" width="339" height="247" viewBox="587 229 339 247"><rect x="646.2" y="282.18000000000006" width="153.60000000000002" height="137.61999999999995" fill="#c0c0c0"/><path d="M646.2 282.18000000000006 H799.8000000000001 V419.8" stroke="#808080" stroke-width="1.2" fill="none"/><path d="M642.2 400.14 H799.8000000000001" stroke="#000" stroke-width="1.3"/><path d="M642.2 380.48 H799.8000000000001" stroke="#000" stroke-width="1.3"/><path d="M642.2 360.82 H799.8000000000001" stroke="#000" stroke-width="1.3"/><path d="M642.2 341.16 H799.8000000000001" stroke="#000" stroke-width="1.3"/><path d="M642.2 321.50 H799.8000000000001" stroke="#000" stroke-width="1.3"/><path d="M642.2 301.84 H799.8000000000001" stroke="#000" stroke-width="1.3"/><path d="M642.2 282.18 H646.2" stroke="#000" stroke-width="1.3"/><path d="M642.2 419.80 H799.8000000000001" stroke="#000" stroke-width="1.4"/><path d="M646.2 281.68000000000006 V424.3" stroke="#000" stroke-width="1.4"/><path d="M697.4000000000001 419.8 V424.3" stroke="#000" stroke-width="1.3"/><path d="M748.6 419.8 V424.3" stroke="#000" stroke-width="1.3"/><path d="M799.8000000000001 419.8 V424.3" stroke="#000" stroke-width="1.3"/><text x="635.5" y="424.10" text-anchor="end" font-size="11.8" textLength="5.2" lengthAdjust="spacingAndGlyphs" font-family="Liberation Sans">0</text><text x="635.5" y="404.44" text-anchor="end" font-size="11.8" textLength="14.6" lengthAdjust="spacingAndGlyphs" font-family="Liberation Sans">0.2</text><text x="635.5" y="384.78" text-anchor="end" font-size="11.8" textLength="14.6" lengthAdjust="spacingAndGlyphs" font-family="Liberation Sans">0.4</text><text x="635.5" y="365.12" text-anchor="end" font-size="11.8" textLength="14.6" lengthAdjust="spacingAndGlyphs" font-family="Liberation Sans">0.6</text><text x="635.5" y="345.46" text-anchor="end" font-size="11.8" textLength="14.6" lengthAdjust="spacingAndGlyphs" font-family="Liberation Sans">0.8</text><text x="635.5" y="325.80" text-anchor="end" font-size="11.8" textLength="5.2" lengthAdjust="spacingAndGlyphs" font-family="Liberation Sans">1</text><text x="635.5" y="306.14" text-anchor="end" font-size="11.8" textLength="12.6" lengthAdjust="spacingAndGlyphs" font-family="Liberation Sans">1.2</text><text x="635.5" y="286.48" text-anchor="end" font-size="11.8" textLength="12.6" lengthAdjust="spacingAndGlyphs" font-family="Liberation Sans">1.4</text><text x="646.80" y="441.2" text-anchor="middle" font-size="11.8" textLength="5.3" lengthAdjust="spacingAndGlyphs" font-family="Liberation Sans">0</text><text x="698.00" y="441.2" text-anchor="middle" font-size="11.8" textLength="5.3" lengthAdjust="spacingAndGlyphs" font-family="Liberation Sans">2</text><text x="749.20" y="441.2" text-anchor="middle" font-size="11.8" textLength="5.3" lengthAdjust="spacingAndGlyphs" font-family="Liberation Sans">4</text><text x="800.40" y="441.2" text-anchor="middle" font-size="11.8" textLength="5.3" lengthAdjust="spacingAndGlyphs" font-family="Liberation Sans">6</text><text x="686.7" y="251.7" font-size="11.6" font-weight="bold" textLength="140.5" lengthAdjust="spacingAndGlyphs" font-family="Liberation Sans">Distance versus Time</text><text x="696.2" y="461.7" font-size="11.6" font-weight="bold" textLength="53.2" lengthAdjust="spacingAndGlyphs" font-family="Liberation Sans">Time (s)</text><text transform="translate(613.3 393.3) rotate(-90)" x="0" y="0" font-size="12" font-weight="bold" textLength="83.5" lengthAdjust="spacingAndGlyphs" font-family="Liberation Sans">Distance (m)</text><text x="678" y="299.3" font-size="11" textLength="99.4" lengthAdjust="spacingAndGlyphs" font-family="Liberation Sans">y = 0.2059x + 0.1462</text><path d="M710.20 354.83 L766.01 310.71" stroke="#000" stroke-width="0.95"/><path d="M766.01 306.75 V326.42 M762.81 306.75 H769.21 M762.81 326.42 H769.21" stroke="#000" stroke-width="1.2"/><path d="M723.00 336.25 V355.91 M719.80 336.25 H726.20 M719.80 355.91 H726.20" stroke="#000" stroke-width="1.2"/><path d="M728.12 319.53 V333.30 M724.92 319.53 H731.32 M724.92 333.30 H731.32" stroke="#000" stroke-width="1.2"/><path d="M743.48 313.64 V329.36 M740.28 313.64 H746.68 M740.28 329.36 H746.68" stroke="#000" stroke-width="1.2"/><path d="M756.28 312.65 V330.35 M753.08 312.65 H759.48 M753.08 330.35 H759.48" stroke="#000" stroke-width="1.2"/><path d="M710.20 355.91 V375.56 M707.00 355.91 H713.40 M707.00 375.56 H713.40" stroke="#000" stroke-width="1.2"/><path d="M766.01 313.09 L769.51 316.59 L766.01 320.09 L762.51 316.59 Z" fill="#000080"/><path d="M723.00 342.58 L726.50 346.08 L723.00 349.58 L719.50 346.08 Z" fill="#000080"/><path d="M728.12 322.92 L731.62 326.42 L728.12 329.92 L724.62 326.42 Z" fill="#000080"/><path d="M743.48 318.00 L746.98 321.50 L743.48 325.00 L739.98 321.50 Z" fill="#000080"/><path d="M756.28 318.00 L759.78 321.50 L756.28 325.00 L752.78 321.50 Z" fill="#000080"/><path d="M710.20 362.24 L713.70 365.74 L710.20 369.24 L706.70 365.74 Z" fill="#000080"/><rect x="812.5" y="333.8" width="105.5" height="33.5" fill="#fff" stroke="#000" stroke-width="1.3"/><path d="M825.1 337.7 L828.9 341.5 L825.1 345.3 L821.3 341.5 Z" fill="#000080"/><path d="M816 358.5 H833.3" stroke="#000" stroke-width="1.3"/><text x="837" y="344.9" font-size="11" textLength="37.5" lengthAdjust="spacingAndGlyphs" font-family="Liberation Sans">Series1</text><text x="837" y="360.8" font-size="11" textLength="79.2" lengthAdjust="spacingAndGlyphs" font-family="Liberation Sans">Linear (Series1)</text></svg></body></html>
